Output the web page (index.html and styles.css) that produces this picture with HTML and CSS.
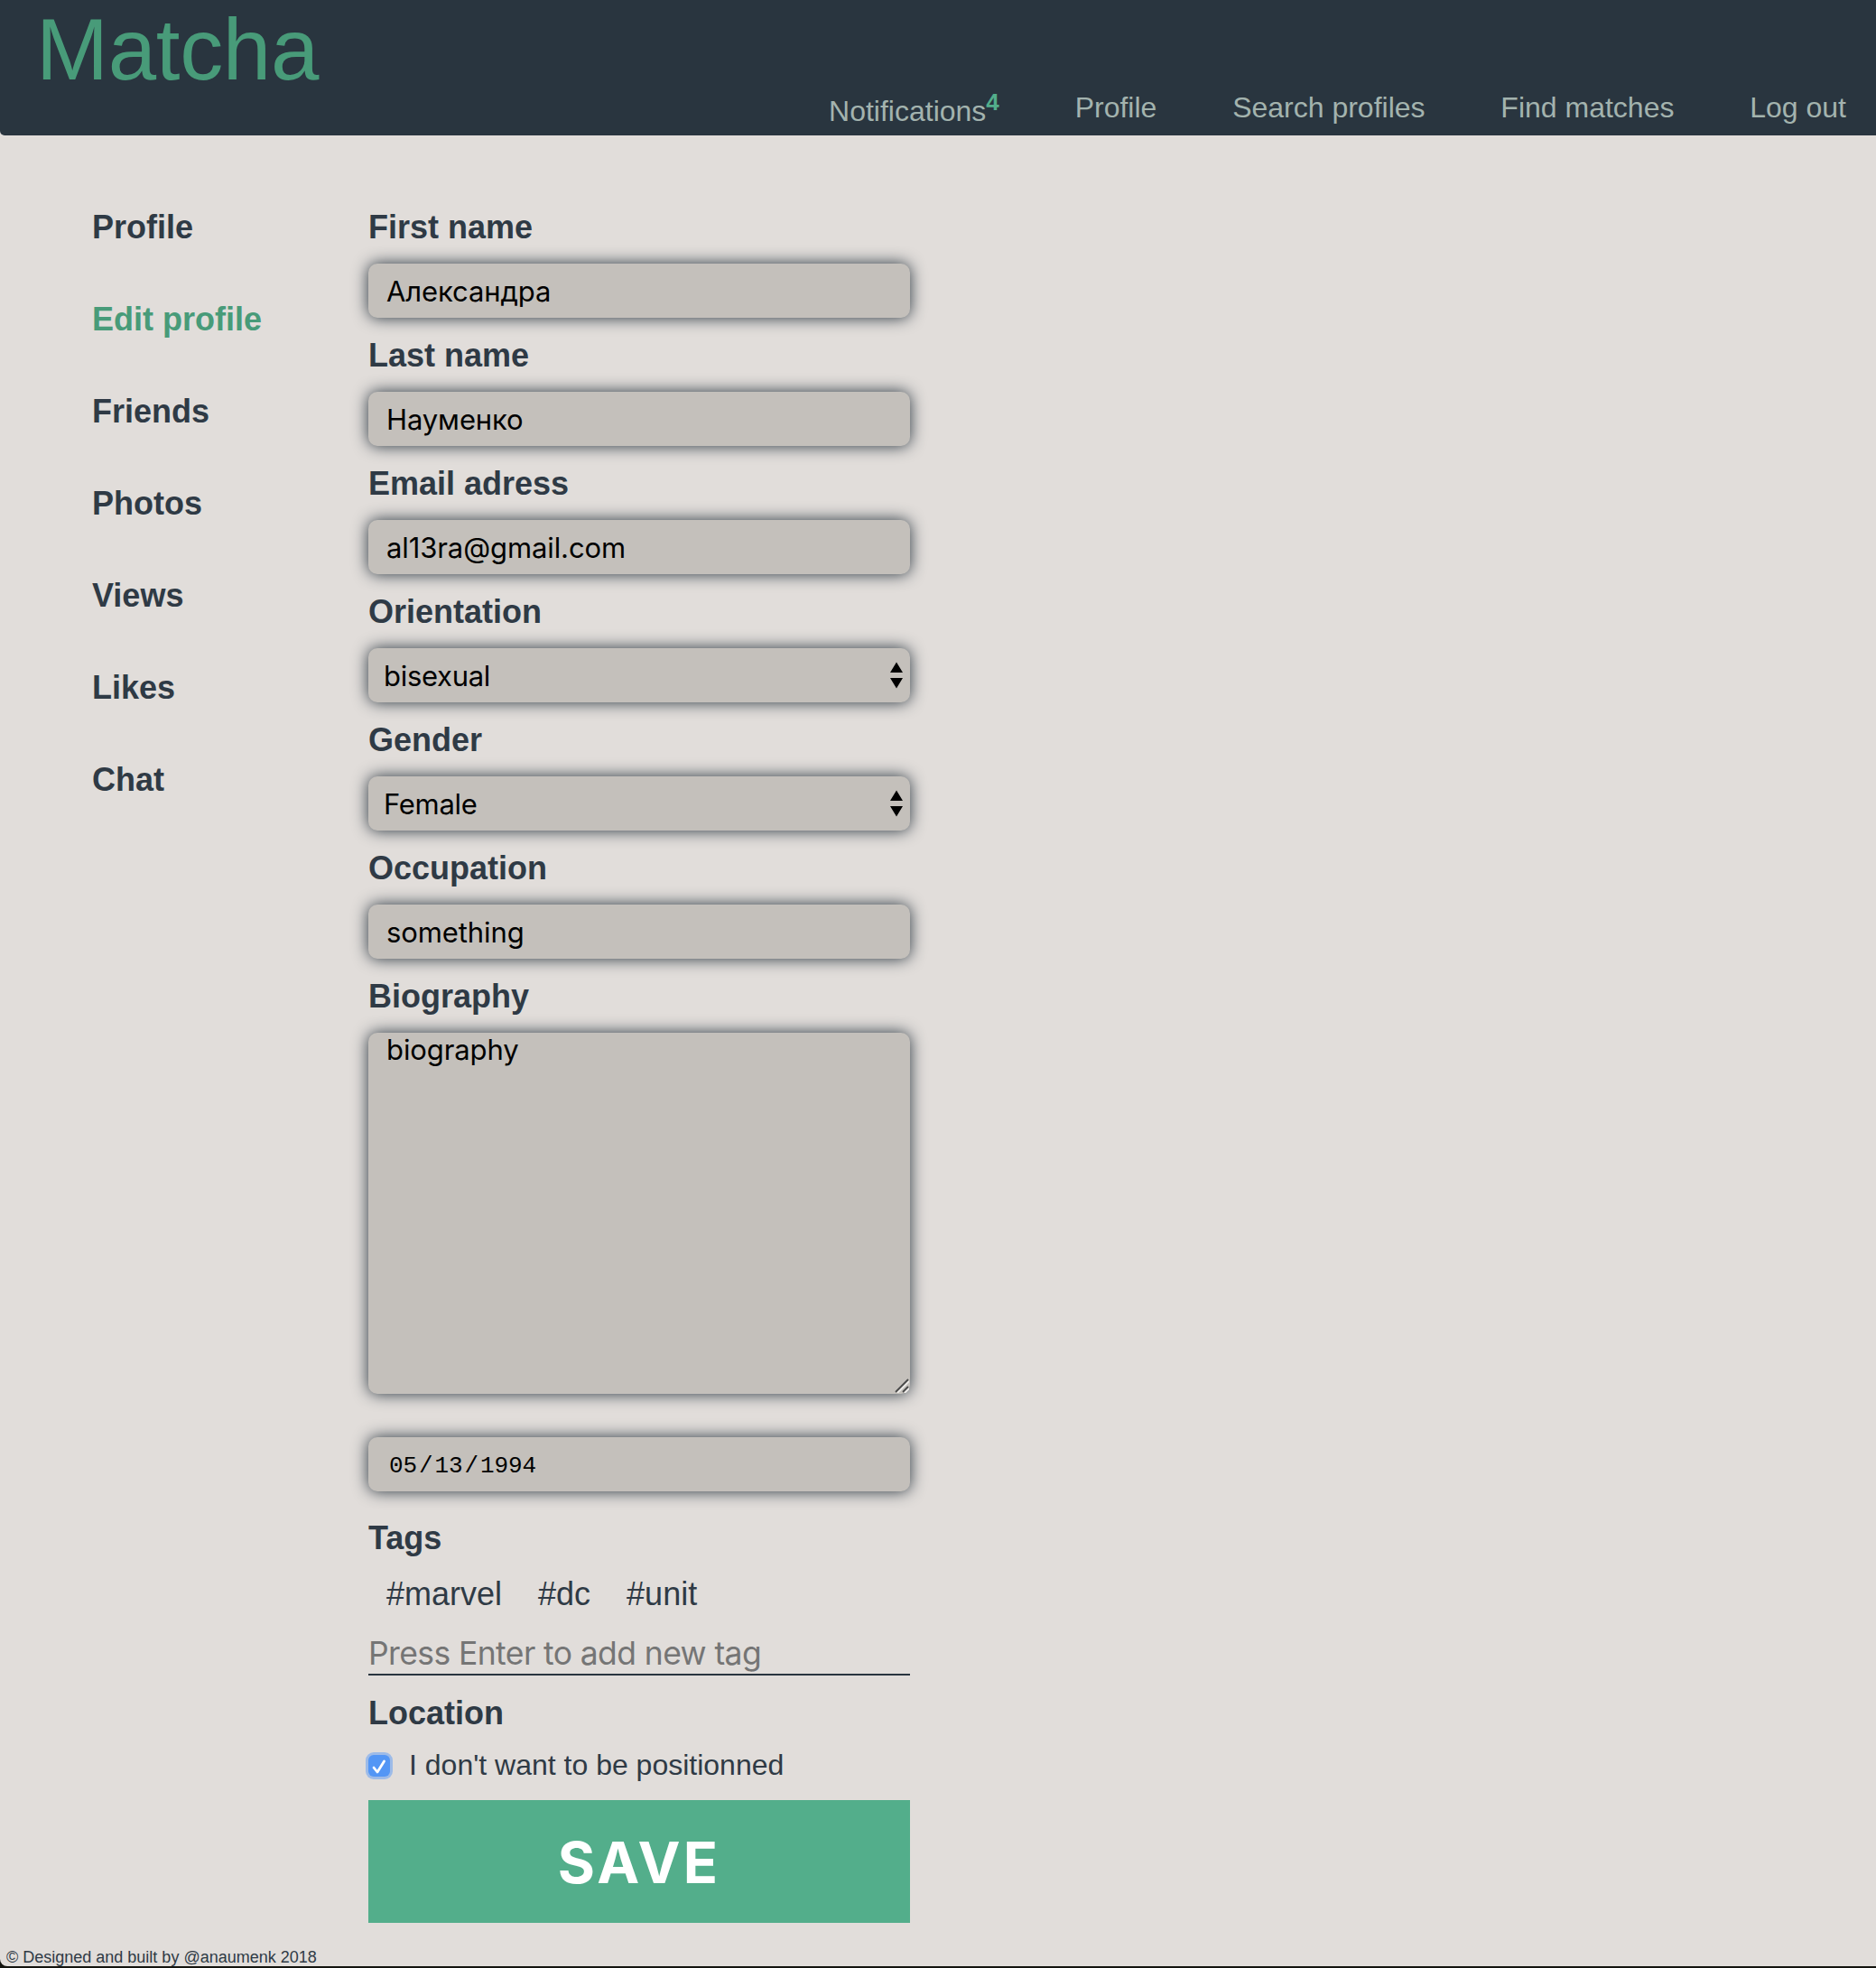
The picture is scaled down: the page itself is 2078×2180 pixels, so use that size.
FILE: index.html
```html
<!DOCTYPE html>
<html lang="en">
<head>
<meta charset="utf-8">
<title>Matcha</title>
<link rel="stylesheet" href="styles.css">
</head>
<body>
<div class="page">
  <header class="header">
    <a class="logo">Matcha</a>
    <nav class="nav">
      <a class="nav-notif">Notifications<sup>4</sup></a>
      <a>Profile</a>
      <a>Search profiles</a>
      <a>Find matches</a>
      <a>Log out</a>
    </nav>
  </header>
  <main class="main">
    <ul class="side">
      <li>Profile</li>
      <li class="active">Edit profile</li>
      <li>Friends</li>
      <li>Photos</li>
      <li>Views</li>
      <li>Likes</li>
      <li>Chat</li>
    </ul>
    <form class="form">
      <label class="label">First name</label>
      <input class="field" type="text" value="Александра">
      <label class="label">Last name</label>
      <input class="field" type="text" value="Науменко">
      <label class="label">Email adress</label>
      <input class="field" type="text" value="al13ra@gmail.com">
      <label class="label">Orientation</label>
      <div class="field select"><span>bisexual</span><svg width="14" height="30" viewBox="0 0 14 30"><path d="M7 0.5L14 12H0zM7 29.5L14 18H0z"/></svg></div>
      <label class="label">Gender</label>
      <div class="field select"><span>Female</span><svg width="14" height="30" viewBox="0 0 14 30"><path d="M7 0.5L14 12H0zM7 29.5L14 18H0z"/></svg></div>
      <label class="label">Occupation</label>
      <input class="field" type="text" value="something">
      <label class="label">Biography</label>
      <div class="area">
        <textarea class="field bio">biography</textarea>
        <svg class="grip" width="16" height="16" viewBox="0 0 16 16" fill="none" stroke-width="1.8"><path d="M3 16L16 3M11 16L16 11" stroke="#eeecea"/><path d="M1 15L15 1M9 15L15 9" stroke="#4a4a4a"/></svg>
      </div>
      <div class="field date"><span>05</span>/<span>13</span>/<span>1994</span></div>
      <label class="label tags-label">Tags</label>
      <div class="tags"><span>#marvel</span><span>#dc</span><span>#unit</span></div>
      <input class="tag-input" type="text" placeholder="Press Enter to add new tag">
      <label class="label location">Location</label>
      <label class="check">
        <span class="box"><svg width="24" height="24" viewBox="0 0 24 24" fill="none" stroke="#fff" stroke-width="2.8" stroke-linecap="round" stroke-linejoin="round"><path d="M6 14L10 19L17.5 7"/></svg></span>
        <span class="check-text">I don't want to be positionned</span>
      </label>
      <button class="save" type="button">SAVE</button>
    </form>
  </main>
  <footer class="footer">© Designed and built by @anaumenk 2018</footer>
</div>
</body>
</html>
```
FILE: styles.css
```css
* { box-sizing: border-box; }
html { background: #14140f; }
body {
  margin: 0;
  font-family: "Liberation Sans", Arial, sans-serif;
  color: #2f3a45;
}
.page {
  height: 2178px;
  background: #e1ddda;
  border-bottom-left-radius: 8px;
  display: flex;
  flex-direction: column;
}
.header {
  height: 150px;
  background: #29353f;
  border-bottom-left-radius: 5px;
  display: flex;
  justify-content: space-between;
  padding: 0 33px 0 40px;
}
.logo { color: #489b79; font-size: 96px; line-height: 110px; letter-spacing: -0.3px; }
.nav {
  display: flex;
  gap: 83.8px;
  padding-top: 100px;
  color: #a3b3ae;
  font-size: 32px;
  line-height: 38px;
}
.nav-notif { padding-top: 4px; }
.nav-notif sup {
  color: #53ae8b;
  font-weight: bold;
  font-size: 26px;
  line-height: 0;
  vertical-align: 12px;
}
.main { display: flex; height: 1980px; padding: 60px 0 0 102px; }
.side {
  list-style: none;
  margin: 0;
  padding: 21px 0 0;
  width: 306px;
  font-size: 36px;
  font-weight: bold;
  line-height: 42px;
  display: flex;
  flex-direction: column;
  gap: 60px;
  height: 700px;
}
.side .active { color: #489b79; }
.form { width: 600px; display: flex; flex-direction: column; }
.label {
  height: 82px;
  padding-top: 21px;
  font-size: 36px;
  font-weight: bold;
  line-height: 42px;
}
.field {
  display: block;
  width: 100%;
  height: 60px;
  margin: 0;
  border: 0;
  outline: 0;
  border-radius: 10px;
  padding: 0 20px;
  background: #c4c0bb;
  box-shadow: 0 0 17px #29353f;
  color: #000;
  font: 31px Inter, sans-serif;
  letter-spacing: -0.1px;
}
.select { display: flex; align-items: center; justify-content: space-between; padding: 0 8px 0 17px; letter-spacing: -0.3px; }
.area { position: relative; height: 400px; margin-bottom: 48px; }
.bio { height: 400px; resize: none; }
.grip { position: absolute; right: 1px; bottom: 1px; }
.date {
  display: flex;
  align-items: center;
  padding: 3px 0 0 21px;
  font: 26px "Liberation Mono", monospace;
  letter-spacing: -0.1px;
}
.date span { padding: 0 2px; }
.tags-label { height: 92px; padding-top: 31px; }
.tags { height: 50px; padding-left: 20px; display: flex; gap: 40px; font-size: 36px; line-height: 44px; }
.tag-input {
  height: 62px;
  border: 0;
  border-bottom: 2px solid #29353f;
  background: none;
  padding: 14px 0 0;
  font: 35.5px Inter, sans-serif;
  letter-spacing: -0.6px;
}
.tag-input::placeholder { color: #757575; opacity: 1; }
.location { height: 78px; }
.check { display: flex; align-items: center; gap: 21px; height: 44px; margin-bottom: 16px; font-size: 32px; }
.check-text { padding-bottom: 2px; }
.box {
  width: 24px;
  height: 24px;
  border-radius: 6px;
  background: #5396f5;
  box-shadow: 0 0 0 3px #9dbbe8;
}
.box svg { display: block; }
.save {
  height: 136px;
  border: 0;
  background: #53ae8b;
  color: #fff;
  font: 650 63px Inter, sans-serif;
  letter-spacing: 3.2px;
  padding-top: 3px;
}
.footer { height: 48px; padding: 27px 7px 0; font-size: 18px; line-height: 22px; }
```
